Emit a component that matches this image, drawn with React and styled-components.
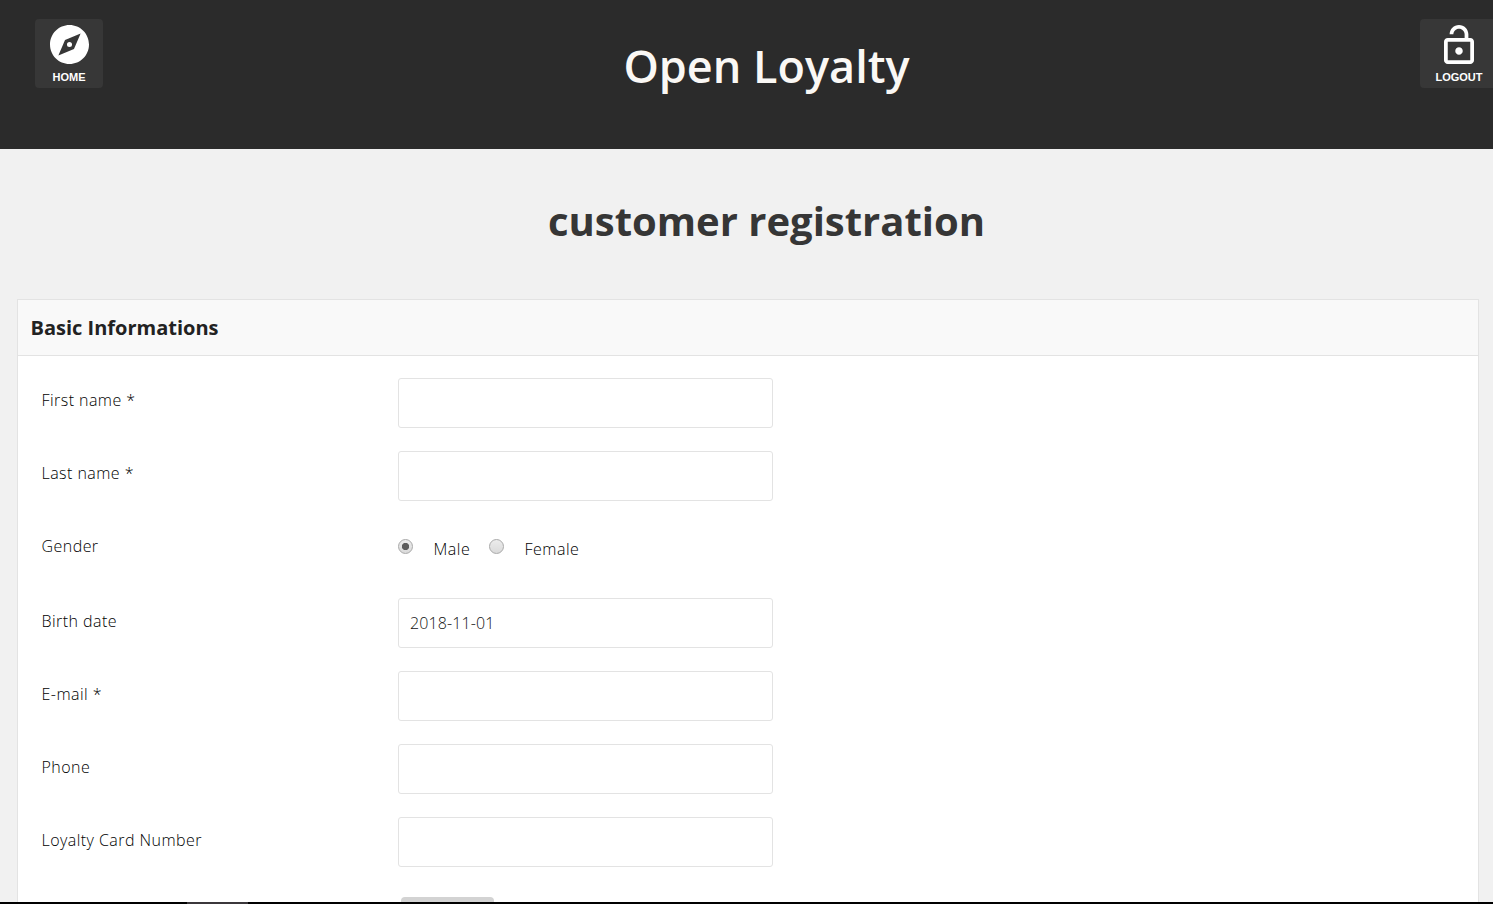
import React from "react";
import styled, { createGlobalStyle } from "styled-components";

const GlobalStyle = createGlobalStyle`
  * { box-sizing: border-box; }
  html, body { margin: 0; height: 904px; overflow: hidden; background: #f1f1f1; }
  body { font-family: "Open Sans", "Liberation Sans", sans-serif; color: #222; }
`;

const Page = styled.div`
  width: 1493px;
  height: 904px;
  display: flex;
  flex-direction: column;
  overflow: hidden;
  background: #f1f1f1;
`;

const Header = styled.header`
  flex: 0 0 149px;
  display: flex;
  justify-content: space-between;
  align-items: flex-start;
  padding: 19px 0 0 35px;
  background: #2b2b2b;
`;

const NavButton = styled.a`
  flex: 0 0 ${(p) => p.$width}px;
  height: 69px;
  display: flex;
  flex-direction: column;
  align-items: center;
  padding-top: 6px;
  margin-right: ${(p) => p.$bleed || 0}px;
  border-radius: 4px;
  background: #373737;
  color: #fff;
  font: bold 11px/13px "Liberation Sans", sans-serif;

  svg { display: block; margin-bottom: 7px; fill: #fff; }
`;

const Brand = styled.h1`
  margin: 15px 0 0 10px;
  font-size: 45px;
  font-weight: 600;
  line-height: 64px;
  color: #faf8f5;
  white-space: nowrap;
`;

const Title = styled.h2`
  flex: 0 0 150px;
  margin: 0;
  padding: 42px 0 0 40px;
  font-size: 40px;
  font-weight: 700;
  line-height: 60px;
  text-align: center;
  color: #363636;
`;

const Panel = styled.section`
  flex: 1 0 603px;
  width: 1462px;
  margin-left: 17px;
  border: 1px solid #e3e3e3;
  border-bottom: 0;
  background: #fff;
  overflow: hidden;
  height: 603px;
`;

const PanelHeading = styled.h3`
  height: 56px;
  margin: 0;
  padding-left: 12.5px;
  border-bottom: 1px solid #e3e3e3;
  background: #f9f9f9;
  font-size: 20px;
  font-weight: 700;
  line-height: 56px;
`;

const Form = styled.form`
  padding: 22px 0 0 23.5px;
`;

const Row = styled.div`
  display: flex;
  align-items: flex-start;
  height: ${(p) => p.$height || 73}px;
`;

const Label = styled.label`
  flex: 0 0 356.5px;
  padding-top: ${(p) => p.$top || 11}px;
  font-size: 16px;
  font-weight: 300;
  line-height: 22px;
  letter-spacing: 0.45px;
  color: #000;
`;

const Input = styled.input`
  width: 375px;
  height: 50px;
  padding: 0 11px;
  border: 1px solid #e3e3e3;
  border-radius: 3px;
  outline: 0;
  background: #fff;
  color: #111;
  font: 300 16px "Open Sans", sans-serif;
  letter-spacing: 0.1px;
`;

const RadioGroup = styled.div`
  display: flex;
  align-items: flex-start;
  padding-top: 14px;
`;

const Choice = styled.label`
  display: flex;
  align-items: flex-start;
  width: 91px;
  font-size: 16px;
  font-weight: 300;
  line-height: 22px;
  letter-spacing: 0.5px;
  color: #000;
  gap: 20.5px;
`;

const Radio = styled.span`
  flex: 0 0 15px;
  height: 15px;
  margin-top: 1px;
  border: 1px solid #a9a9a9;
  border-radius: 50%;
  background: ${(p) =>
    p.$checked
      ? "radial-gradient(circle, #5c5c5c 0 3.3px, transparent 4px), "
      : ""}linear-gradient(#ececec, #dadada);
`;

const UploadButton = styled.button`
  width: 93px;
  height: 30px;
  margin: 7px 0 0 3px;
  border: 0;
  border-radius: 4px;
  background: #d3d3d3;
`;

const BottomEdge = styled.footer`
  flex: 0 0 2px;
  display: flex;
  padding-left: 187px;
  background: #000;
`;

const EdgeMark = styled.span`
  width: 61px;
  background: #3b373b;
`;

function Field({ label, value = "", labelTop }) {
  return (
    <Row>
      <Label $top={labelTop}>{label}</Label>
      <Input type="text" defaultValue={value} aria-label={label} />
    </Row>
  );
}

export default function App() {
  return (
    <Page>
      <GlobalStyle />
      <Header>
        <NavButton $width={68}>
          <svg width="39" height="39" viewBox="2 2 20 20">
            <path d="M12 10.7a1.3 1.3 0 1 0 0 2.6 1.3 1.3 0 0 0 0-2.6zM12 2C6.48 2 2 6.48 2 12s4.48 10 10 10 10-4.48 10-10S17.52 2 12 2zm2.3 12.3L6.3 17.7l3.4-8L17.7 6.3l-3.4 8z" />
          </svg>
          HOME
        </NavButton>
        <Brand>Open Loyalty</Brand>
        <NavButton $width={78} $bleed={-5}>
          <svg width="30" height="39" viewBox="4 1 16 21" preserveAspectRatio="none">
            <path d="M12 17c1.1 0 2-.9 2-2s-.9-2-2-2-2 .9-2 2 .9 2 2 2zm6-9h-1V6c0-2.76-2.24-5-5-5S7 3.24 7 6h2c0-1.66 1.34-3 3-3s3 1.34 3 3v2H6c-1.1 0-2 .9-2 2v10c0 1.1.9 2 2 2h12c1.1 0 2-.9 2-2V10c0-1.1-.9-2-2-2zm0 12H6V10h12v10z" />
          </svg>
          LOGOUT
        </NavButton>
      </Header>
      <Title>customer registration</Title>
      <Panel>
        <PanelHeading>Basic Informations</PanelHeading>
        <Form>
          <Field label="First name *" />
          <Field label="Last name *" />
          <Row $height={74}>
            <Label>Gender</Label>
            <RadioGroup>
              <Choice><Radio $checked />Male</Choice>
              <Choice><Radio />Female</Choice>
            </RadioGroup>
          </Row>
          <Field label="Birth date" value="2018-11-01" labelTop={12} />
          <Field label="E-mail *" labelTop={12} />
          <Field label="Phone" labelTop={12} />
          <Field label="Loyalty Card Number" labelTop={12} />
          <Row>
            <Label />
            <UploadButton type="button" aria-label="Upload" />
          </Row>
        </Form>
      </Panel>
      <BottomEdge><EdgeMark /></BottomEdge>
    </Page>
  );
}
